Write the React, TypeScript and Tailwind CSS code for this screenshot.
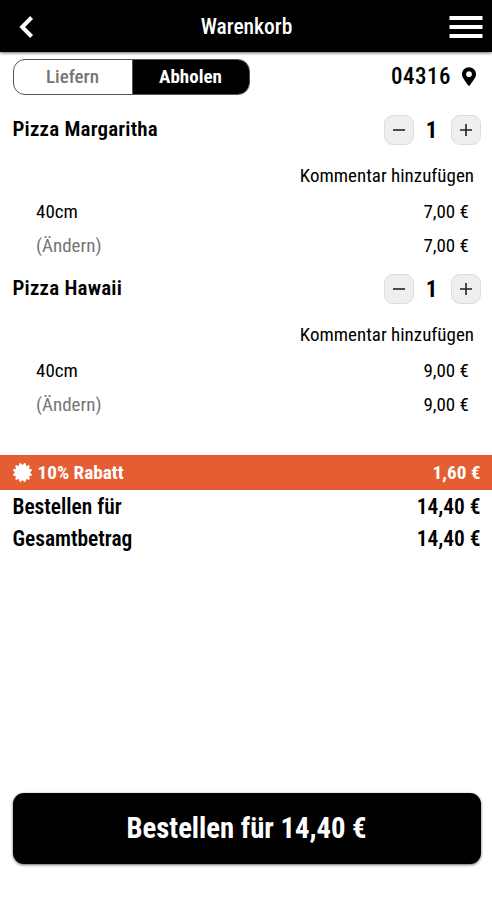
import { FaMapMarkerAlt, FaCertificate } from 'react-icons/fa';

const items = [
  { name: 'Pizza Margaritha', anzahl: 1, groesse: '40cm', preis: '7,00 €' },
  { name: 'Pizza Hawaii', anzahl: 1, groesse: '40cm', preis: '9,00 €' },
];

export default function App() {
  return (
    <div className="flex h-[900px] w-full flex-col bg-white font-['Roboto_Condensed','Roboto',sans-serif] [font-stretch:75%] text-black">
      <header className="flex h-[52px] shrink-0 items-center justify-between bg-black pl-[18px] pr-[9px] text-white shadow-[0_1px_3px_rgba(0,0,0,0.6)]">
        <svg className="h-6 w-[34px]" viewBox="0 0 34 24" fill="none" stroke="currentColor" strokeWidth="4">
          <path d="M13.6 3.5 L4.2 13 L13.6 22.5" />
        </svg>
        <h1 className="pr-[8px] pt-[2px] text-[21.5px] font-medium">Warenkorb</h1>
        <svg className="h-6 w-[34px]" viewBox="0 0 34 24" fill="currentColor">
          <path d="M.5 2h33v4h-33zM.5 11h33v4h-33zM.5 20h33v4h-33z" />
        </svg>
      </header>

      <div className="flex h-[61px] shrink-0 items-start justify-between pl-[12.5px] pr-[16px] pt-[7px]">
        <div className="flex h-[36px] w-[237px] overflow-hidden rounded-xl border border-[#555] text-[19px]">
          <button className="w-[119px] border-r border-[#555] font-medium text-[#757575]">Liefern</button>
          <button className="flex-1 bg-black font-bold text-white">Abholen</button>
        </div>
        <div className="flex h-[34px] items-center gap-[11px] text-[23px] font-medium">
          <span className="pt-[2px] tracking-[0.5px]">04316</span>
          <FaMapMarkerAlt className="h-[19px] w-[14px]" />
        </div>
      </div>

      {items.map(item => (
        <CartItem key={item.name} {...item} />
      ))}

      <div className="mt-[24px] flex h-[35px] shrink-0 items-center justify-between bg-[#e45d33] pl-[12.5px] pr-[11.5px] text-[19.2px] font-bold text-white">
        <div className="flex items-center gap-[6px]">
          <FaCertificate className="h-[19px] w-[19px]" />
          <span className="pt-[2px]">10% Rabatt</span>
        </div>
        <span className="pt-[2px]">1,60 €</span>
      </div>
      <TotalRow label="Bestellen für" value="14,40 €" />
      <TotalRow label="Gesamtbetrag" value="14,40 €" />

      <button className="mb-[36px] ml-[12.5px] mr-[11.5px] mt-auto h-[71px] rounded-[11px] bg-black text-[28.7px] font-bold text-white shadow-[0_1px_3px_rgba(0,0,0,0.6)]">
        Bestellen für 14,40 €
      </button>
    </div>
  );
}

function CartItem({ name, anzahl, groesse, preis }: { name: string; anzahl: number; groesse: string; preis: string }) {
  return (
    <section className="flex h-[159px] shrink-0 flex-col text-[19px]">
      <div className="flex h-[34px] items-center justify-between pl-[12.5px] pr-[11px]">
        <h2 className="text-[21px] font-semibold tracking-[0.2px]">{name}</h2>
        <div className="flex items-center">
          <StepButton d="M2 8h12" />
          <span className="w-[37px] pr-[2px] pt-[2px] text-center text-[23px] font-bold">{anzahl}</span>
          <StepButton d="M2 8h12M8 2v12" />
        </div>
      </div>
      <div className="mt-3 flex h-[34px] items-center justify-end pr-[18px]">Kommentar hinzufügen</div>
      <div className="mt-[2px] flex h-[34px] items-center justify-between pl-9 pr-[23px]">
        <span>{groesse}</span>
        <span>{preis}</span>
      </div>
      <div className="flex h-[34px] items-center justify-between pl-9 pr-[23px]">
        <span className="text-[#757575]">(Ändern)</span>
        <span>{preis}</span>
      </div>
    </section>
  );
}

function StepButton({ d }: { d: string }) {
  return (
    <button className="flex h-[30px] w-[30px] items-center justify-center rounded-[9px] border border-[#dcdcdc] bg-[#efefef]">
      <svg className="h-4 w-4" viewBox="0 0 16 16" fill="none" stroke="#222" strokeWidth="1.6">
        <path d={d} />
      </svg>
    </button>
  );
}

function TotalRow({ label, value }: { label: string; value: string }) {
  return (
    <div className="flex h-8 shrink-0 items-center justify-between pl-[12.5px] pr-[11.5px] pt-[2px] text-[21.4px] font-semibold">
      <span>{label}</span>
      <span>{value}</span>
    </div>
  );
}
